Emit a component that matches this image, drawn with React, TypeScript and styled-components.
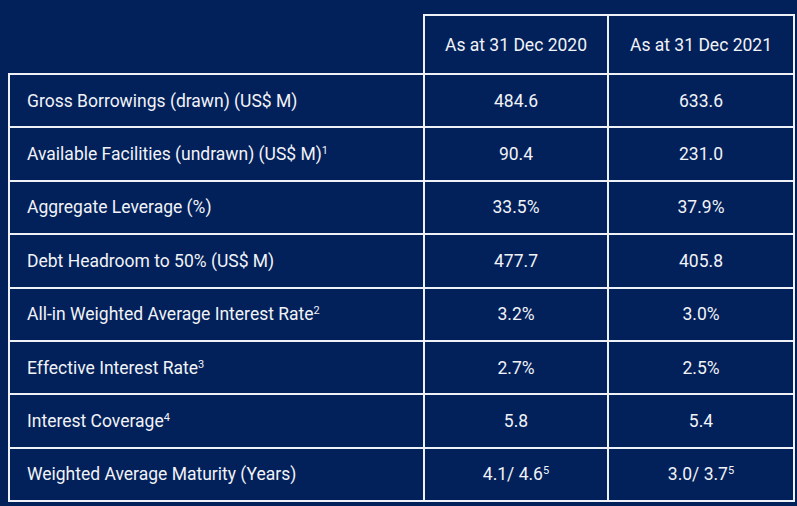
import React from "react";
import styled, { createGlobalStyle } from "styled-components";

const Global = createGlobalStyle`
  html, body { margin: 0; padding: 0; background: #02205a; }
  body { font-family: Roboto, "Noto Sans", Arial, sans-serif; }
`;

const Page = styled.div`
  width: 797px;
  height: 506px;
  background: #02205a;
  padding: 14px 0 0 8px;
  box-sizing: border-box;
  overflow: hidden;
`;

const Table = styled.table`
  border-collapse: collapse;
  table-layout: fixed;
  width: 785px;
  color: #f1f3f7;
  font-size: 17.5px;
`;

const HeadRow = styled.tr`
  height: 59px;
`;

const Row = styled.tr`
  height: 53.4px;
`;

const Blank = styled.th`
  border: none;
  border-bottom: 2px solid #eef1f6;
`;

const HeadCell = styled.th`
  border: 2px solid #eef1f6;
  font-weight: 400;
  text-align: center;
  padding: 0;
`;

const Label = styled.td`
  border: 2px solid #eef1f6;
  padding: 0 0 0 17px;
  text-align: left;
`;

const Value = styled.td`
  border: 2px solid #eef1f6;
  text-align: center;
  padding: 0;
`;

const Sup = styled.sup`
  font-size: 11px;
  line-height: 0;
  vertical-align: 6px;
`;

type R = { label: string; n?: string; a: string; an?: string; b: string; bn?: string };

const rows: R[] = [
  { label: "Gross Borrowings (drawn) (US$ M)", a: "484.6", b: "633.6" },
  { label: "Available Facilities (undrawn) (US$ M)", n: "1", a: "90.4", b: "231.0" },
  { label: "Aggregate Leverage (%)", a: "33.5%", b: "37.9%" },
  { label: "Debt Headroom to 50% (US$ M)", a: "477.7", b: "405.8" },
  { label: "All-in Weighted Average Interest Rate", n: "2", a: "3.2%", b: "3.0%" },
  { label: "Effective Interest Rate", n: "3", a: "2.7%", b: "2.5%" },
  { label: "Interest Coverage", n: "4", a: "5.8", b: "5.4" },
  { label: "Weighted Average Maturity (Years)", a: "4.1/ 4.6", an: "5", b: "3.0/ 3.7", bn: "5" },
];

export default function App() {
  return (
    <>
      <Global />
      <Page>
        <Table>
          <colgroup>
            <col style={{ width: 415 }} />
            <col style={{ width: 184 }} />
            <col style={{ width: 186 }} />
          </colgroup>
          <thead>
            <HeadRow>
              <Blank />
              <HeadCell>As at 31 Dec 2020</HeadCell>
              <HeadCell>As at 31 Dec 2021</HeadCell>
            </HeadRow>
          </thead>
          <tbody>
            {rows.map((r) => (
              <Row key={r.label}>
                <Label>
                  {r.label}
                  {r.n && <Sup>{r.n}</Sup>}
                </Label>
                <Value>
                  {r.a}
                  {r.an && <Sup>{r.an}</Sup>}
                </Value>
                <Value>
                  {r.b}
                  {r.bn && <Sup>{r.bn}</Sup>}
                </Value>
              </Row>
            ))}
          </tbody>
        </Table>
      </Page>
    </>
  );
}
